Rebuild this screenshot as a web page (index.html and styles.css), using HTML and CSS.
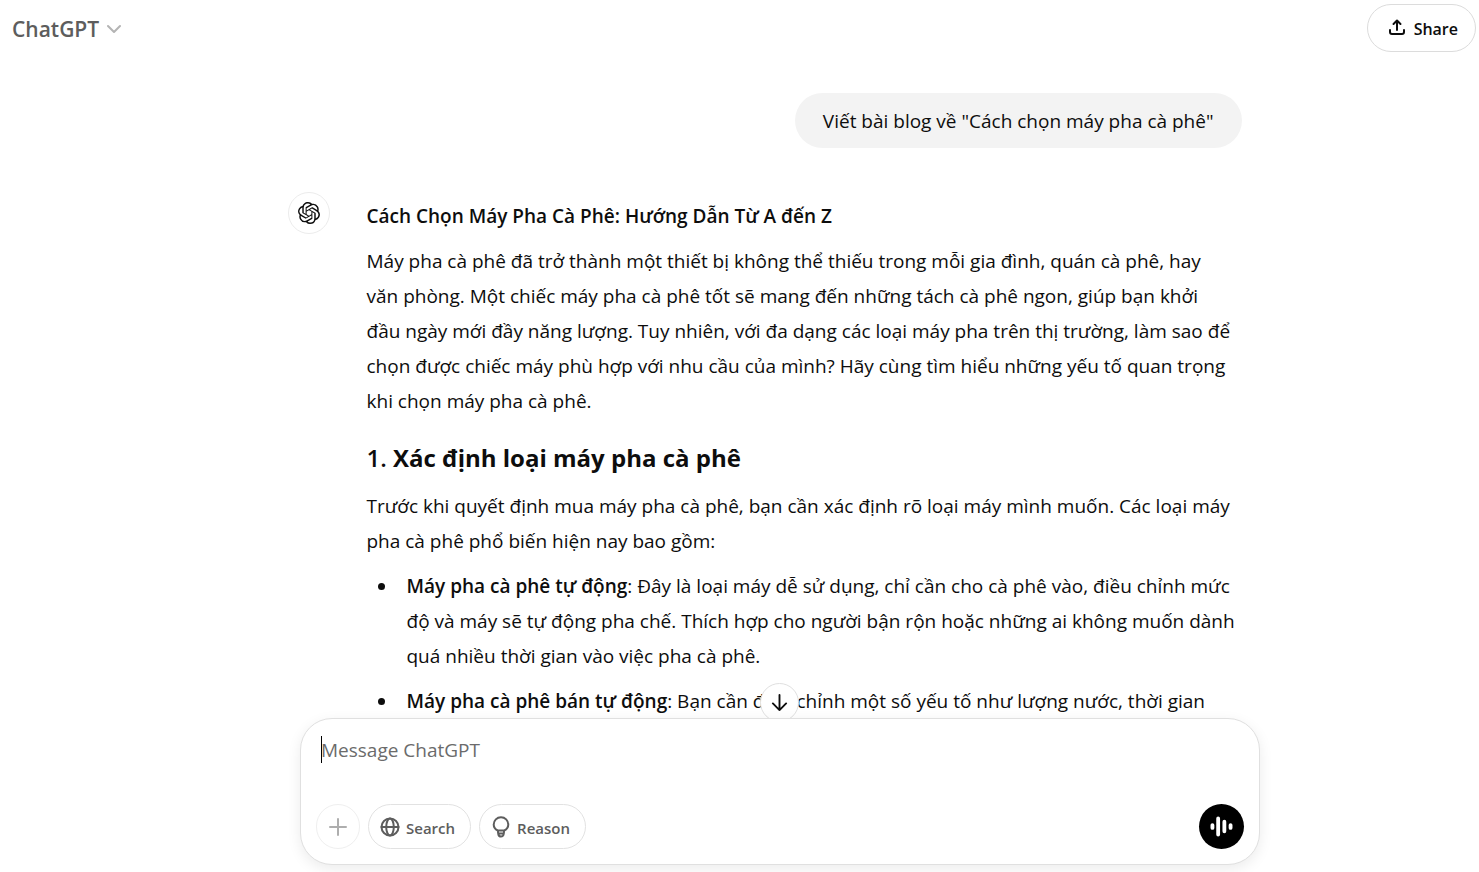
FILE: index.html
```html
<!DOCTYPE html>
<html lang="vi">
<head>
<meta charset="utf-8">
<meta name="viewport" content="width=device-width, initial-scale=1">
<title>ChatGPT</title>
<link rel="stylesheet" href="styles.css">
</head>
<body>
<div class="app">
  <header class="topbar">
    <button class="model" type="button">ChatGPT
      <svg class="chevron" viewBox="0 0 14 14" aria-hidden="true"><path d="M1 4l6 6 6-6"/></svg>
    </button>
    <button class="share" type="button">
      <svg class="share-icon" viewBox="0 0 18 18" aria-hidden="true"><path d="M9 11V2M5.500 5L9 1.500 12.500 5M2 11v2a2 2 0 0 0 2 2h10a2 2 0 0 0 2-2v-2"/></svg>
      <span>Share</span>
    </button>
  </header>

  <main class="thread">
    <div class="column">
      <div class="prompt">Viết bài blog về "Cách chọn máy pha cà phê"</div>
      <article class="answer">
        <div class="avatar">
          <svg class="logo" viewBox="0 0 24 24" aria-hidden="true"><path d="M22.282 9.821a5.985 5.985 0 0 0-.516-4.910 6.046 6.046 0 0 0-6.510-2.900A6.065 6.065 0 0 0 4.981 4.182a5.985 5.985 0 0 0-3.998 2.900 6.046 6.046 0 0 0 .743 7.097 5.980 5.980 0 0 0 .510 4.911 6.051 6.051 0 0 0 6.515 2.900A5.985 5.985 0 0 0 13.260 24a6.056 6.056 0 0 0 5.772-4.206 5.990 5.990 0 0 0 3.997-2.900 6.056 6.056 0 0 0-.747-7.073zM13.260 22.430a4.476 4.476 0 0 1-2.876-1.040l.141-.081 4.779-2.758a.795.795 0 0 0 .392-.681v-6.737l2.020 1.168a.071.071 0 0 1 .038.052v5.583a4.504 4.504 0 0 1-4.494 4.494zM3.600 18.304a4.470 4.470 0 0 1-.535-3.014l.142.085 4.783 2.759a.771.771 0 0 0 .780 0l5.843-3.369v2.332a.080.080 0 0 1-.033.062L9.740 19.950a4.500 4.500 0 0 1-6.140-1.646zM2.340 7.896a4.485 4.485 0 0 1 2.366-1.973V11.600a.766.766 0 0 0 .388.677l5.815 3.354-2.020 1.169a.076.076 0 0 1-.071 0l-4.830-2.787A4.504 4.504 0 0 1 2.340 7.872zm16.597 3.855l-5.833-3.387L15.119 7.200a.076.076 0 0 1 .071 0l4.830 2.791a4.494 4.494 0 0 1-.676 8.105v-5.678a.790.790 0 0 0-.407-.667zm2.010-3.023l-.141-.085-4.774-2.782a.776.776 0 0 0-.785 0L9.409 9.230V6.897a.066.066 0 0 1 .028-.061l4.830-2.787a4.500 4.500 0 0 1 6.680 4.660zm-12.640 4.135l-2.020-1.164a.080.080 0 0 1-.038-.057V6.075a4.500 4.500 0 0 1 7.375-3.453l-.142.080L8.704 5.460a.795.795 0 0 0-.393.681zm1.097-2.365l2.602-1.500 2.607 1.500v2.999l-2.597 1.500-2.607-1.500z"/></svg>
        </div>
        <div class="prose">
          <p class="lead">Cách Chọn Máy Pha Cà Phê: Hướng Dẫn Từ A đến Z</p>
          <p>Máy pha cà phê đã trở thành một thiết bị không thể thiếu trong mỗi gia đình, quán cà phê, hay<br>
          văn phòng. Một chiếc máy pha cà phê tốt sẽ mang đến những tách cà phê ngon, giúp bạn khởi<br>
          đầu ngày mới đầy năng lượng. Tuy nhiên, với đa dạng các loại máy pha trên thị trường, làm sao để<br>
          chọn được chiếc máy phù hợp với nhu cầu của mình? Hãy cùng tìm hiểu những yếu tố quan trọng<br>
          khi chọn máy pha cà phê.</p>
          <h3>1. <strong>Xác định loại máy pha cà phê</strong></h3>
          <p>Trước khi quyết định mua máy pha cà phê, bạn cần xác định rõ loại máy mình muốn. Các loại máy<br>
          pha cà phê phổ biến hiện nay bao gồm:</p>
          <ul>
            <li><strong>Máy pha cà phê tự động</strong>: Đây là loại máy dễ sử dụng, chỉ cần cho cà phê vào, điều chỉnh mức<br>
            độ và máy sẽ tự động pha chế. Thích hợp cho người bận rộn hoặc những ai không muốn dành<br>
            quá nhiều thời gian vào việc pha cà phê.</li>
            <li><strong>Máy pha cà phê bán tự động</strong>: Bạn cần điều chỉnh một số yếu tố như lượng nước, thời gian</li>
          </ul>
        </div>
      </article>
    </div>
  </main>

  <div class="dock">
    <button class="to-bottom" type="button" aria-label="Scroll to bottom">
      <svg class="down-icon" viewBox="0 0 18 18" aria-hidden="true"><path d="M9 1v16M2 10l7 7 7-7"/></svg>
    </button>
    <form class="composer">
      <input class="message" type="text" placeholder="Message ChatGPT" aria-label="Message ChatGPT">
      <span class="caret"></span>
      <div class="tools">
        <button class="tool add" type="button" aria-label="Add">
          <svg class="plus-icon" viewBox="0 0 18 18" aria-hidden="true"><path d="M9 1v16M1 9h16"/></svg>
        </button>
        <button class="tool" type="button">
          <svg class="tool-icon" viewBox="0 0 20 20" aria-hidden="true"><circle cx="10" cy="10" r="8.500"/><ellipse cx="10" cy="10" rx="3.800" ry="8.500"/><path d="M1.500 10h17"/></svg>
          <span>Search</span>
        </button>
        <button class="tool" type="button">
          <svg class="tool-icon bulb" viewBox="0 0 18 22" aria-hidden="true"><path d="M5.800 14.500C3.300 13.300 1.700 11.200 1.700 8.500a7.300 7.300 0 0 1 14.600 0c0 2.700-1.600 4.800-4.100 6zM5.800 14.500l.500 3.500c.200 1.600 1 2.600 2.700 2.600s2.500-1 2.700-2.600l.500-3.500M6.300 17.500h5.400"/></svg>
          <span>Reason</span>
        </button>
        <button class="voice" type="button" aria-label="Voice mode">
          <svg class="voice-icon" viewBox="0 0 24 22" aria-hidden="true"><path d="M2.500 9.500v3M8.500 2.500v17M15 6v10M21.500 9.500v3"/></svg>
        </button>
      </div>
    </form>
  </div>
</div>
</body>
</html>
```
FILE: styles.css
```css
* {
  box-sizing: border-box;
}

body {
  margin: 0;
  background: #fff;
  color: #0d0d0d;
  font-family: "Open Sans", "Noto Sans", sans-serif;
  font-size: 19px;
  line-height: 35px;
}

button,
input {
  font: inherit;
  color: inherit;
}

button {
  display: flex;
  align-items: center;
  justify-content: center;
  padding: 0;
  background: #fff;
  border: 0;
  cursor: pointer;
}

svg {
  flex: none;
  fill: none;
  stroke: currentColor;
  stroke-width: 2;
  stroke-linecap: round;
  stroke-linejoin: round;
}

.app {
  display: flex;
  flex-direction: column;
  height: 100vh;
  overflow: hidden;
}

.topbar {
  display: flex;
  flex: none;
  justify-content: space-between;
  align-items: center;
  padding: 4px 3px 0 12px;
}

.model {
  gap: 8px;
  padding-top: 2px;
  color: #5d5d5d;
  font-size: 21px;
  font-weight: 600;
}

.chevron {
  width: 14px;
  height: 14px;
  color: #b4b4b4;
}

.share {
  gap: 8px;
  height: 48px;
  padding: 0 17px 0 20px;
  border: 1px solid #dcdcdc;
  border-radius: 24px;
  font-size: 16px;
  font-weight: 600;
}

.share-icon {
  width: 18px;
  height: 18px;
}

.share span,
.tool span {
  padding-top: 3px;
}

.thread {
  flex: 1;
  min-height: 0;
  overflow: hidden;
  padding: 41px 0 0 50px;
}

.column {
  max-width: 954px;
  margin: 0 auto;
}

.prompt {
  width: fit-content;
  margin-left: auto;
  padding: 11px 28px 9px;
  background: #f3f3f3;
  border-radius: 28px;
}

.answer {
  display: flex;
  gap: 37px;
  padding-top: 44px;
}

.avatar {
  display: grid;
  flex: none;
  place-items: center;
  width: 42px;
  height: 42px;
  border: 1px solid #ececec;
  border-radius: 50%;
}

.logo {
  width: 22px;
  height: 22px;
  fill: currentColor;
  stroke: none;
}

.prose {
  flex: 1;
  padding-top: 7px;
  white-space: nowrap;
}

.prose p {
  margin: 0 0 10px;
}

.prose .lead,
.prose li strong {
  font-weight: 600;
}

.prose h3 {
  margin: 21px 0 14px;
  font-size: 24px;
  font-weight: 600;
}

.prose h3 strong {
  font-weight: 700;
}

.prose ul {
  margin: 0;
  padding-left: 40px;
  list-style: none;
}

.prose li {
  position: relative;
  margin-bottom: 10px;
}

.prose li::before {
  content: "";
  position: absolute;
  top: 14px;
  left: -29px;
  width: 7px;
  height: 7px;
  background: currentColor;
  border-radius: 50%;
}

.dock {
  position: relative;
  flex: none;
  padding: 0 0 7px 81px;
}

.to-bottom {
  position: absolute;
  top: -35px;
  left: calc(50% + 20px);
  width: 39px;
  height: 39px;
  border: 1px solid #e0e0e0;
  border-radius: 50%;
}

.down-icon {
  width: 17px;
  height: 17px;
}

.composer {
  position: relative;
  display: flex;
  flex-direction: column;
  justify-content: space-between;
  max-width: 960px;
  height: 147px;
  margin: 0 auto;
  padding: 14px 15px 15px;
  background: #fff;
  border: 1px solid #e0e0e0;
  border-radius: 32px;
  box-shadow: 0 4px 14px rgba(0, 0, 0, 0.08);
}

.message {
  width: 100%;
  height: 35px;
  padding: 0 5px;
  background: none;
  border: 0;
  outline: 0;
}

.message::placeholder {
  color: #6b6b6b;
  opacity: 1;
}

.caret {
  position: absolute;
  top: 17px;
  left: 20px;
  width: 1px;
  height: 27px;
  background: #000;
}

.tools {
  display: flex;
  gap: 8px;
}

.tool {
  gap: 6px;
  height: 45px;
  padding: 0 15px 0 11px;
  border: 1px solid #e2e2e2;
  border-radius: 23px;
  color: #5d5d5d;
  font-size: 15px;
  font-weight: 600;
}

.add {
  width: 44px;
  padding: 0;
  border-color: #efefef;
  color: #aeaeae;
}

.plus-icon {
  width: 18px;
  height: 18px;
}

.tool-icon {
  width: 20px;
  height: 20px;
}

.bulb {
  width: 20px;
  height: 22px;
}

.voice {
  width: 45px;
  height: 45px;
  margin-left: auto;
  background: #000;
  border-radius: 50%;
  color: #fff;
}

.voice-icon {
  width: 23px;
  height: 21px;
  stroke-width: 4;
}
```
